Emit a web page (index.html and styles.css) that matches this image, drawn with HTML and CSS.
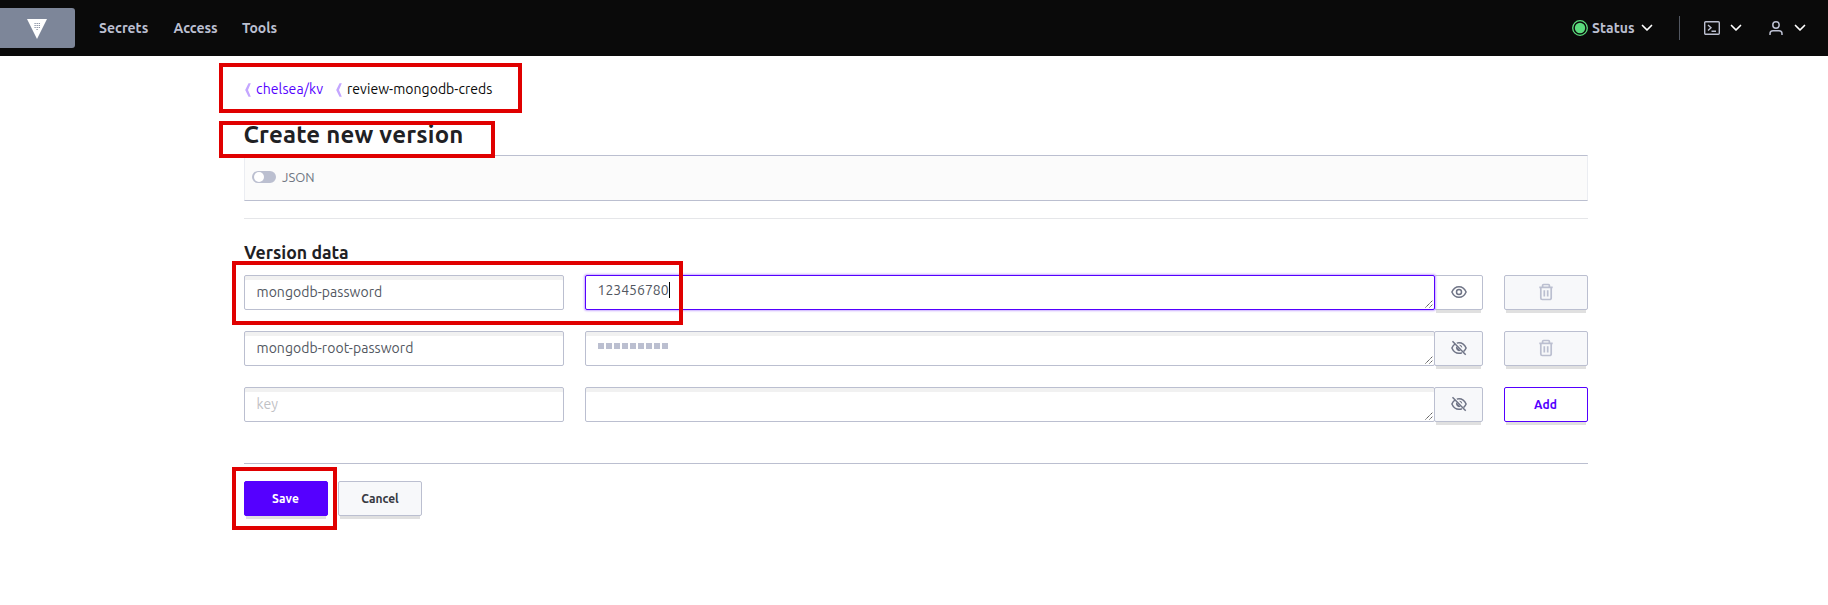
FILE: index.html
```html
<!DOCTYPE html>
<html lang="en">
<head>
<meta charset="utf-8">
<title>Vault</title>
<link rel="stylesheet" href="styles.css">
</head>
<body>
<svg class="defs" width="0" height="0">
  <symbol id="chev" viewBox="0 0 12 8"><path d="M1.500 1.500 6 6l4.500-4.500" fill="none" stroke="#fff" stroke-width="1.700" stroke-linecap="round" stroke-linejoin="round"/></symbol>
  <symbol id="back" viewBox="0 0 6 14"><path d="M5.800.2H3.500L.2 7l3.300 6.800h2.300L3 7z" fill="#c4a6ff"/></symbol>
  <symbol id="eye" viewBox="0 0 16 16"><g fill="none" stroke="#6f7486" stroke-width="1.500"><path d="M.9 8C2.400 4.500 5 2.700 8 2.700s5.600 1.800 7.100 5.300C13.600 11.500 11 13.300 8 13.300S2.400 11.500.9 8z"/><circle cx="8" cy="8" r="2.500"/></g></symbol>
  <symbol id="eye-off" viewBox="0 0 16 16"><g fill="none" stroke="#6f7486" stroke-width="1.500"><path d="M4.200 3.800C2.700 4.700 1.600 6.100.9 8c1.500 3.500 4.100 5.300 7.100 5.300 1 0 2-.2 2.900-.6M5.800 3.100C6.600 2.800 7.300 2.700 8 2.700c3 0 5.600 1.800 7.100 5.300-.6 1.500-1.500 2.700-2.600 3.600"/><path d="M1.500 1.300 14.700 14.700"/></g><path d="M5.300 6.300A3.200 3.200 0 0 0 9.600 10.700zM8 4.800A3.200 3.200 0 0 1 11.200 8z" fill="#6f7486"/></symbol>
  <symbol id="trash" viewBox="0 0 16 18"><g fill="none" stroke="#bbbfd0" stroke-width="1.700"><path d="M1.300 4.400h13.400M4.600 4V2.500a1 1 0 0 1 1-1h4.800a1 1 0 0 1 1 1V4M2.800 4.500v10.500a1.500 1.500 0 0 0 1.500 1.500h7.400a1.500 1.500 0 0 0 1.500-1.500V4.500M6.300 7.300v6.200M9.700 7.300v6.200"/></g></symbol>
  <symbol id="grip" viewBox="0 0 8 8"><path d="M.5 7.500l7-7M4.500 7.500l3-3" stroke="#444" stroke-dasharray="1.400 .5" fill="none"/></symbol>
</svg>
<header class="nav">
  <a class="logo"><svg width="20" height="20" viewBox="0 0 20 20"><path d="M0 0h20L10 20z" fill="#fff"/><path d="M7.500 4.500h5.500M7.500 6.500h5.500M7.500 8.500h5.500M9.500 10.500h1.500" stroke="#7d8699" stroke-dasharray="1.200 .9"/></svg></a>
  <nav class="links"><a class="n-secrets">Secrets</a><a class="n-access">Access</a><a class="n-tools">Tools</a></nav>
  <div class="tools">
    <div class="status"><svg width="16" height="16" viewBox="0 0 16 16"><circle cx="8" cy="8" r="7.300" fill="none" stroke="#5bdc7d" stroke-width="1.300"/><circle cx="8" cy="8" r="5.200" fill="#5bdc7d"/></svg><span class="n-status">Status</span><svg class="chev" width="12" height="8"><use href="#chev"/></svg></div>
    <div class="console"><svg width="16" height="14" viewBox="0 0 16 14"><g fill="none" stroke="#bbbfd0" stroke-width="1.400"><rect x=".7" y=".7" width="14.600" height="12.600" rx="1"/><path d="M4 4l3 2.800L4 9.600M7.500 10.300H12"/></g></svg><svg width="12" height="8"><use href="#chev"/></svg></div>
    <div class="user"><svg width="14" height="14" viewBox="0 0 14 14"><g fill="none" stroke="#bbbfd0" stroke-width="1.500"><circle cx="7" cy="4" r="3.200"/><path d="M1 14v-1.200a3 3 0 0 1 3-3h6a3 3 0 0 1 3 3V14"/></g></svg><svg width="12" height="8"><use href="#chev"/></svg></div>
  </div>
</header>
<main class="page">
  <div class="crumbs">
    <svg width="6" height="14"><use href="#back"/></svg><a class="c-path">chelsea/kv</a>
    <svg width="6" height="14"><use href="#back"/></svg><span class="c-name">review-mongodb-creds</span>
  </div>
  <h1 class="title"><span>Create new version</span></h1>
  <div class="toolbar"><i class="toggle"></i><span>JSON</span></div>
  <hr class="rule">
  <h2 class="subtitle"><span>Version data</span></h2>
  <div class="rows">
    <div class="row">
      <div class="field"><span class="t-pass">mongodb-password</span></div>
      <div class="secret"><div class="area focused"><span class="digits">123456780</span><i class="caret"></i><svg class="grip" width="8" height="8"><use href="#grip"/></svg></div><button class="btn mask shown"><svg width="16" height="16"><use href="#eye"/></svg></button></div>
      <button class="btn"><svg width="16" height="18"><use href="#trash"/></svg></button>
    </div>
    <div class="row">
      <div class="field"><span class="t-root">mongodb-root-password</span></div>
      <div class="secret"><div class="area"><span class="dots"><i></i><i></i><i></i><i></i><i></i><i></i><i></i><i></i><i></i></span><svg class="grip" width="8" height="8"><use href="#grip"/></svg></div><button class="btn mask"><svg width="16" height="16"><use href="#eye-off"/></svg></button></div>
      <button class="btn"><svg width="16" height="18"><use href="#trash"/></svg></button>
    </div>
    <div class="row">
      <div class="field"><span class="t-key">key</span></div>
      <div class="secret"><div class="area"><svg class="grip" width="8" height="8"><use href="#grip"/></svg></div><button class="btn mask"><svg width="16" height="16"><use href="#eye-off"/></svg></button></div>
      <button class="btn add"><span>Add</span></button>
    </div>
  </div>
  <div class="actions"><button class="btn save"><span>Save</span></button><button class="btn cancel"><span>Cancel</span></button></div>
</main>
<div class="mark m-crumbs"></div>
<div class="mark m-title"></div>
<div class="mark m-row"></div>
<div class="mark m-save"></div>
</body>
</html>
```
FILE: styles.css
```css
* { box-sizing: border-box; }
body { margin: 0; height: 605px; overflow: hidden; position: relative; background: #fff; color: #1f2124; font: 14px/20px Ubuntu, "Noto Sans", sans-serif; }
.defs { position: absolute; }
svg { display: block; flex: none; }
span, a { white-space: nowrap; }
.nav { height: 56px; background: #0a0a0a; display: flex; align-items: center; color: #bbbfd0; font-weight: 700; font-size: 14px; }
.logo { width: 75px; height: 40px; padding: 11px 0 0 27px; background: #7d8699; border-radius: 0 3px 3px 0; }
.links { display: flex; margin-left: 24px; padding-bottom: 1px; }
.n-secrets { width: 74.500px; }
.n-access { width: 68.500px; }
.tools { margin-left: auto; display: flex; align-items: center; padding-right: 22px; }
.status { display: flex; align-items: center; width: 108px; height: 24px; border-right: 1px solid #525761; }
.n-status { width: 45px; margin-left: 4px; padding-bottom: 1px; letter-spacing: .1px; }
.status .chev { margin-left: 4px; }
.console { display: flex; align-items: center; gap: 10px; margin-left: 24px; }
.user { display: flex; align-items: center; gap: 11px; margin-left: 27px; }
.page { width: 1344px; margin-left: 244px; }
.crumbs { height: 65px; padding: 23px 0 0 1px; display: flex; align-items: flex-start; font-size: 14px; letter-spacing: .04px; color: #0a0a0a; }
.crumbs svg { margin-top: 4px; }
.c-path { color: #5500ff; margin-left: 5px; width: 80px; letter-spacing: .12px; }
.c-name { margin-left: 5px; }
.title { margin: 0; height: 34px; font-size: 24px; line-height: 28px; letter-spacing: .2px; font-weight: 700; text-indent: -.5px; }
.toolbar { height: 46px; border: 1px solid #ebedf2; border-top-color: #bbbfd0; border-bottom-color: #bbbfd0; background: #fbfbfb; display: flex; align-items: center; padding: 0 0 2px 7px; color: #6f7682; font-size: 13px; }
.toggle { width: 24px; height: 12px; border-radius: 6px; background: #bbbfd0; padding: 1px 2px; margin-right: 6px; }
.toggle::before { content: ""; display: block; width: 10px; height: 10px; border-radius: 5px; background: #fff; }
.rule { height: 1px; border: 0; background: #e5e6e9; margin: 17px 0 0; }
.subtitle { margin: 0; padding-top: 22px; height: 56px; line-height: 24px; font-size: 17.700px; font-weight: 700; }
.rows { display: flex; flex-direction: column; gap: 21px; height: 189px; border-bottom: 1px solid #bbbfd0; }
.row { display: grid; grid-template-columns: 320px 898px 84px; column-gap: 21px; height: 35px; }
.field, .area { height: 35px; border: 1px solid #bbbfd0; border-radius: 2px; box-shadow: inset 0 4px 0 #f1f1f1; background: #fff; color: #525761; padding: 6px 12px; }
.field { padding-left: 11.500px; letter-spacing: .05px; }
.secret { display: flex; }
.area { position: relative; width: 850px; padding-top: 4px; display: flex; align-items: flex-start; }
.focused { border-color: #5500ff; box-shadow: 0 0 2px 1px #c9adff; z-index: 1; padding-left: 11.500px; }
.caret { width: 1px; height: 16px; margin-top: 2px; background: #000; }
.dots { display: flex; gap: 2px; padding: 7px 0 0; }
.dots i { width: 6px; height: 6px; background: #bbbfd0; }
.grip { position: absolute; right: 1px; bottom: 1px; }
.btn { width: 84px; height: 35px; border: 1px solid #bbbfd0; border-radius: 2px; background: #f7f8fa; box-shadow: 0 5px 0 -2px #e0e0e0; padding: 0 0 1px; display: flex; align-items: center; justify-content: center; font: 700 12px/18px Ubuntu, "Noto Sans", sans-serif; color: #373a42; }
.btn span { padding-top: 1px; }
.mask { width: 49px; margin-left: -1px; }
.shown { background: #fff; }
.add { background: #fff; color: #5500ff; border-color: #5500ff; }
.save { background: #5500ff; border-color: #5500ff; color: #fff; }
.add span, .save span { margin-right: 1px; letter-spacing: .1px; }
.actions { display: flex; gap: 10px; padding-top: 17px; }
.t-key { color: #bfc1c5; }
.mark { position: absolute; z-index: 3; border: 4px solid #e00000; }
.m-crumbs { left: 219px; top: 63px; width: 303px; height: 50px; }
.m-title { left: 219px; top: 121px; width: 276px; height: 37px; }
.m-row { left: 232px; top: 261px; width: 451px; height: 64px; }
.m-save { left: 232px; top: 467px; width: 105px; height: 63px; }
```
